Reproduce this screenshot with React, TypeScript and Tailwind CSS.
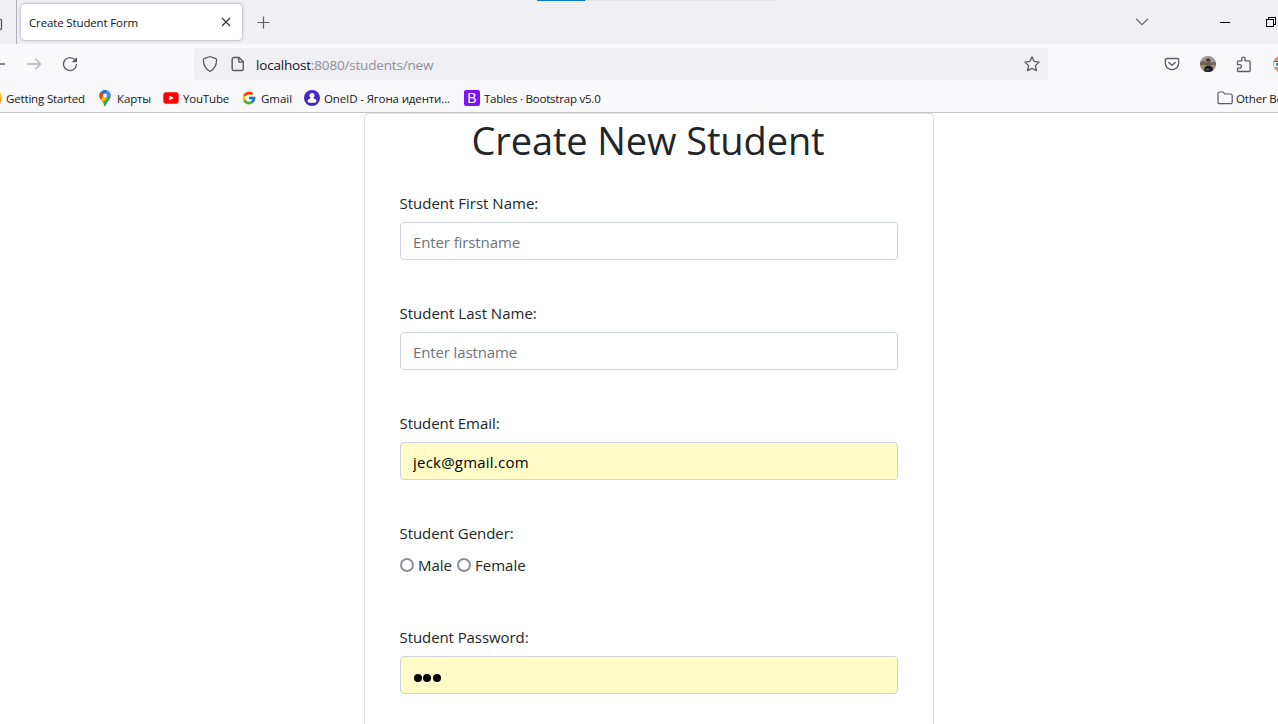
import React from "react";

const iconStroke = {
  fill: "none",
  stroke: "#5b5b66",
  strokeWidth: 1.3,
  strokeLinecap: "round" as const,
  strokeLinejoin: "round" as const,
};

function TabStrip() {
  return (
    <div className="flex h-11 shrink-0 bg-[#f0eff4]">
      <div className="flex h-11 w-[17px] shrink-0 items-center border-r border-[#b0afb8]">
        <svg className="mt-[3px]" width="3" height="14" viewBox="0 0 3 14" {...iconStroke}>
          <path d="M0 2.500h.5a1 1 0 0 1 1 1v8a1 1 0 0 1-1 1H0" />
        </svg>
      </div>
      <div className="mt-1 ml-[4px] flex h-9 w-[221px] shrink-0 items-center justify-between rounded bg-white pr-2 pl-[8px] shadow-[0_0_3px_rgba(0,0,0,0.4)]">
        <span className="pt-[2px] text-[11.5px] tracking-[-0.140px] whitespace-nowrap text-[#15141a]">Create Student Form</span>
        <svg className="mr-[3px]" width="10" height="10" viewBox="0 0 10 10" fill="none" stroke="#33323b" strokeWidth="1.1">
          <path d="M1 1l8 8M9 1L1 9" />
        </svg>
      </div>
      <div className="ml-[15px] flex items-center pt-px">
        <svg width="13" height="13" viewBox="0 0 13 13" fill="none" stroke="#5b5b66" strokeWidth="1.2">
          <path d="M6.500 .5v12M.5 6.500h12" />
        </svg>
      </div>
      <div className="ml-[267px] flex h-px w-[241px] bg-[#e4e4e6]">
        <div className="h-px w-12 bg-[#0078d7]" />
      </div>
      <div className="ml-[357px] flex items-center">
        <svg width="14" height="8" viewBox="0 0 14 8" fill="none" stroke="#6c6b75" strokeWidth="1.3" strokeLinecap="round">
          <path d="M1.500 1.300L7 6.700l5.500-5.400" />
        </svg>
      </div>
      <div className="ml-[71px] flex w-[10px] items-center">
        <div className="h-px w-[10px] bg-black" />
      </div>
      <div className="ml-[36px] flex items-center">
        <svg width="10" height="10" viewBox="0 0 10 10" fill="none" stroke="#000" shapeRendering="crispEdges">
          <path d="M.5 2.500h7v7h-7zM2.500 2.500v-2h7v7h-2" />
        </svg>
      </div>
    </div>
  );
}

function NavBar() {
  return (
    <div className="flex h-10 shrink-0 items-center overflow-hidden">
      <svg className="shrink-0" width="6" height="14" viewBox="0 0 6 14" {...iconStroke}>
        <path d="M-8 7H4.500" />
      </svg>
      <svg className="ml-[20px] shrink-0" width="16" height="16" viewBox="0 0 16 16" {...iconStroke} stroke="#b9b9be">
        <path d="M1.500 8h13M9.500 3l5 5-5 5" />
      </svg>
      <svg className="ml-[20px] shrink-0" width="16" height="16" viewBox="0 0 16 16" {...iconStroke}>
        <path d="M13.200 4.200A6.500 6.500 0 1 0 14.500 8.500" />
        <path d="M15 .9v5.300H9.700z" fill="#5b5b66" stroke="none" />
      </svg>
      <div className="ml-[116px] flex h-8 w-[854px] shrink-0 items-center rounded bg-[#f0eff4] pr-2 pl-2">
        <svg width="16" height="18" viewBox="0 0 16 18" {...iconStroke}>
          <path d="M8 1.500l5.800 2.200c.5.200.8.600.8 1.100 0 5-1.500 9-6.600 11.700C2.900 13.800 1.400 9.800 1.400 4.800c0-.5.300-.9.800-1.100z" />
        </svg>
        <svg className="ml-[13px]" width="14" height="16" viewBox="0 0 14 16" {...iconStroke} strokeWidth="1.400">
          <path d="M2.700 1.500h5.300l4.300 4.300v7.200a1.500 1.500 0 0 1-1.500 1.500H2.700A1.500 1.500 0 0 1 1.200 13V3a1.500 1.500 0 0 1 1.500-1.500z" />
          <path d="M7.800 1.800v4.300h4.300" />
        </svg>
        <span className="ml-[11px] pt-[3px] text-[13.5px] tracking-[-0.180px] whitespace-nowrap text-[#8f8e97]">
          <span className="text-[#15141a]">localhost</span>:8080/students/new
        </span>
        <svg className="ml-auto" width="16" height="16" viewBox="0 0 16 16" {...iconStroke}>
          <path d="M8 .9l2.150 4.550 4.950.650-3.600 3.500.9 5L8 12.200l-4.400 2.400.9-5L.9 6.100l4.950-.650z" />
        </svg>
      </div>
      <svg className="ml-[116px] shrink-0" width="16" height="16" viewBox="0 0 16 16" {...iconStroke}>
        <path d="M2.700 2.500h10.600a1.400 1.400 0 0 1 1.400 1.400v3.300a6.700 6.500 0 0 1-13.400 0V3.900a1.400 1.400 0 0 1 1.400-1.400z" />
        <path d="M4.800 6.400L8 9.300l3.200-2.900" />
      </svg>
      <svg className="ml-[20px] shrink-0" width="16" height="16" viewBox="0 0 16 16">
        <defs>
          <clipPath id="avatar"><circle cx="8" cy="8" r="8" /></clipPath>
        </defs>
        <g clipPath="url(#avatar)">
          <path d="M0 0h16v16H0z" fill="#9a9896" />
          <path d="M0 6l4-1 3 2 9-1v4H0z" fill="#6c675c" />
          <path d="M0 9h16v7H0z" fill="#a48d57" />
          <path d="M4 16l.5-4.500 2.500-2h2.800l3 2.200V16z" fill="#171b29" />
          <path d="M6.300 4h3.800v4L8.500 9.600 6.500 8z" fill="#7d5a48" />
          <path d="M6 5.200c0-3.500 4.300-3.500 4.300 0L8 4.200z" fill="#252423" />
          <path d="M6 12.800l3 .2v1.200l-3-.2z" fill="#8c6551" />
        </g>
      </svg>
      <svg className="ml-[20px] shrink-0" width="17" height="17" viewBox="0 0 17 17" {...iconStroke} strokeWidth="1.300">
        <path d="M1.500 7.500V5.800a1 1 0 0 1 1-1h3.300V2.700a1.600 1.600 0 0 1 3.200 0v2.100h4.100a1 1 0 0 1 1 1v8.700a1 1 0 0 1-1 1H2.500a1 1 0 0 1-1-1v-2.300h2.100a1.800 1.800 0 0 0 0-3.600H1.500z" />
      </svg>
      <svg className="ml-[20px] shrink-0" width="6" height="16" viewBox="0 0 6 16">
        <circle cx="8" cy="8" r="8" fill="#c39d7b" />
        <path d="M1 6h5v5H1z" fill="#e9f3f4" />
        <path d="M3 7h3v3H3z" fill="#3ca2b5" />
        <path d="M1 5.500h5" stroke="#8a5c45" />
      </svg>
    </div>
  );
}

function Bookmarks() {
  return (
    <div className="flex h-7 shrink-0 items-center overflow-hidden text-[11.5px] whitespace-nowrap text-[#15141a]">
      <svg className="shrink-0" width="2" height="12" viewBox="0 0 2 12">
        <path d="M0 0q2 3 1.500 8L0 12z" fill="#ff9a16" />
        <path d="M0 0q1 2 1.200 5H0z" fill="#ffd52e" />
      </svg>
      <span className="ml-[4px] w-[92px] shrink-0 pt-[2px] tracking-[-0.160px]">Getting Started</span>
      <svg className="shrink-0" width="14" height="16" viewBox="0 0 14 16">
        <defs>
          <clipPath id="pin">
            <path d="M7 0a5.600 5.600 0 0 1 5.600 5.700c0 4.200-4 5.300-4.700 9.300-.1.600-.4 1-.9 1s-.8-.4-.9-1C5.400 11 1.400 9.900 1.400 5.700A5.600 5.600 0 0 1 7 0z" />
          </clipPath>
        </defs>
        <g clipPath="url(#pin)">
          <path d="M0 0h14v16H0z" fill="#34a853" />
          <path d="M0 16L0 8l7-2 3 2-7 6z" fill="#fbbc04" />
          <path d="M6 12l7-8h2v12H6z" fill="#34a853" />
          <path d="M0 2l3-1 4 5-5 5-2-1z" fill="#fbbc04" />
          <path d="M0 1l3 1 3 3-3 4-3-2z" fill="#ea4335" />
          <path d="M2 0h8L6 5 2.500 2z" fill="#1a73e8" />
          <path d="M8 0h6v4L9 8 7 6z" fill="#4285f4" />
        </g>
        <circle cx="7" cy="5.500" r="2" fill="#fff" />
      </svg>
      <span className="ml-[5px] w-[46px] shrink-0 pt-[2px] tracking-[-0.130px]">Карты</span>
      <svg className="shrink-0" width="16" height="12" viewBox="0 0 16 12">
        <rect x=".3" y=".3" width="15.400" height="11.400" rx="3" fill="#f00" />
        <path d="M6.400 3.400v5.200L10.800 6z" fill="#fff" />
      </svg>
      <span className="ml-[4px] w-[59px] shrink-0 pt-[2px] tracking-[-0.180px]">YouTube</span>
      <svg className="shrink-0" width="14" height="14" viewBox="2 2 44 44">
        <path fill="#FFC107" d="M43.600 20.100H42V20H24v8h11.300C33.700 32.700 29.200 36 24 36c-6.600 0-12-5.400-12-12s5.400-12 12-12c3.100 0 5.800 1.200 7.900 3l5.700-5.700C34 6.100 29.300 4 24 4 13 4 4 13 4 24s9 20 20 20 20-9 20-20c0-1.300-.1-2.700-.4-3.900z" />
        <path fill="#FF3D00" d="M6.300 14.700l6.600 4.800C14.700 15.100 19 12 24 12c3.100 0 5.800 1.200 7.900 3l5.700-5.700C34 6.100 29.300 4 24 4 16.300 4 9.700 8.300 6.300 14.700z" />
        <path fill="#4CAF50" d="M24 44c5.200 0 9.900-2 13.400-5.200l-6.200-5.200C29.200 35.100 26.700 36 24 36c-5.200 0-9.600-3.300-11.300-7.900l-6.500 5C9.500 39.600 16.200 44 24 44z" />
        <path fill="#1976D2" d="M43.600 20.100H42V20H24v8h11.300c-.8 2.200-2.200 4.200-4.100 5.600l6.200 5.200C37 39.200 44 34 44 24c0-1.300-.1-2.700-.4-3.900z" />
      </svg>
      <span className="ml-[5px] w-[43px] shrink-0 pt-[2px] tracking-[-0.040px]">Gmail</span>
      <svg className="shrink-0" width="16" height="16" viewBox="0 0 16 16">
        <circle cx="8" cy="8" r="8" fill="#4527c0" />
        <circle cx="8" cy="5.400" r="2.500" fill="#fff" />
        <path d="M6.500 7h3v1.600q2.800.5 3 2.400-.2 1.700-2 1.800H5.500q-1.800-.1-2-1.800.2-1.900 3-2.400z" fill="#fff" />
      </svg>
      <span className="ml-[4px] w-[140px] shrink-0 pt-[2px] tracking-[-0.130px]">OneID - Ягона иденти...</span>
      <div className="flex h-4 w-4 shrink-0 items-center justify-center rounded-[2px] bg-[#7c13f5] font-['Liberation_Sans',sans-serif] text-[14px] leading-none text-white">B</div>
      <span className="ml-[4px] shrink-0 pt-[2px] tracking-[-0.220px]">Tables · Bootstrap v5.0</span>
      <svg className="ml-auto shrink-0" width="16" height="14" viewBox="0 0 16 14" {...iconStroke} strokeWidth="1.200">
        <path d="M2.500 1h3.700l1.500 2h6a1.500 1.500 0 0 1 1.500 1.500v6.700a1.500 1.500 0 0 1-1.500 1.500H2.500A1.500 1.500 0 0 1 1 11.200V2.500A1.500 1.500 0 0 1 2.500 1z" />
      </svg>
      <span className="ml-[3px] w-[42px] shrink-0 overflow-hidden pt-[2px] tracking-[-0.150px]">Other Bookmarks</span>
    </div>
  );
}

function Label({ text, spacing = "" }: { text: string; spacing?: string }) {
  return <label className={"mb-2 -ml-[0.5px] block h-6 text-[15px] leading-[26px] " + spacing}>{text}</label>;
}

const inputBase =
  "block h-[38px] w-full rounded-[4px] border border-[#ced4da] pt-[2px] pl-[12px] text-[15px] outline-none placeholder:text-[#6c757d] placeholder:opacity-100 ";

function RadioOption({ text }: { text: string }) {
  return (
    <label className="flex items-center text-[15px] leading-[24px]">
      <input type="radio" name="gender" className="mt-px mr-[4px] h-[14px] w-[14px] appearance-none rounded-full border-2 border-[#8f8f9d] bg-white" />
      {text}
    </label>
  );
}

export default function App() {
  return (
    <div className="flex h-[724px] w-[1278px] flex-col overflow-hidden bg-[#f9f9fb] font-['Open_Sans',sans-serif]">
      <TabStrip />
      <NavBar />
      <Bookmarks />
      <main className="flex min-h-0 flex-1 justify-center overflow-hidden border-t border-[#c6c6c9] bg-white pl-5">
        <div className="h-[800px] w-[570px] shrink-0 rounded-[4px] border border-[#dfdfdf] px-[35px] text-[#212529]">
          <h1 className="mb-7 h-12 pr-[2px] text-center text-[38px] leading-[53px] tracking-[-0.110px]">Create New Student</h1>
          <form>
            <div className="h-[110px]">
              <Label text="Student First Name:" />
              <input type="text" placeholder="Enter firstname" className={inputBase + "bg-white tracking-[-0.110px]"} />
            </div>
            <div className="h-[110px]">
              <Label text="Student Last Name:" />
              <input type="text" placeholder="Enter lastname" className={inputBase + "bg-white tracking-[-0.120px]"} />
            </div>
            <div className="h-[110px]">
              <Label text="Student Email:" spacing="tracking-[-0.060px]" />
              <input type="text" defaultValue="jeck@gmail.com" className={inputBase + "bg-[#fffcc8] tracking-[0.220px] text-black"} />
            </div>
            <div className="h-[104px]">
              <Label text="Student Gender:" spacing="tracking-[-0.060px]" />
              <div className="flex h-6 gap-[5px] pt-[1px]">
                <RadioOption text="Male" />
                <RadioOption text="Female" />
              </div>
            </div>
            <div>
              <Label text="Student Password:" spacing="tracking-[-0.080px]" />
              <div className="flex h-[38px] items-center gap-[1.800px] rounded-[4px] border border-[#ced4da] bg-[#fffcc8] pt-[5px] pl-[12.500px]" role="textbox" aria-label="Student Password">
                <span className="h-[8px] w-[8px] rounded-full bg-black" />
                <span className="h-[8px] w-[8px] rounded-full bg-black" />
                <span className="h-[8px] w-[8px] rounded-full bg-black" />
              </div>
            </div>
          </form>
        </div>
      </main>
    </div>
  );
}
